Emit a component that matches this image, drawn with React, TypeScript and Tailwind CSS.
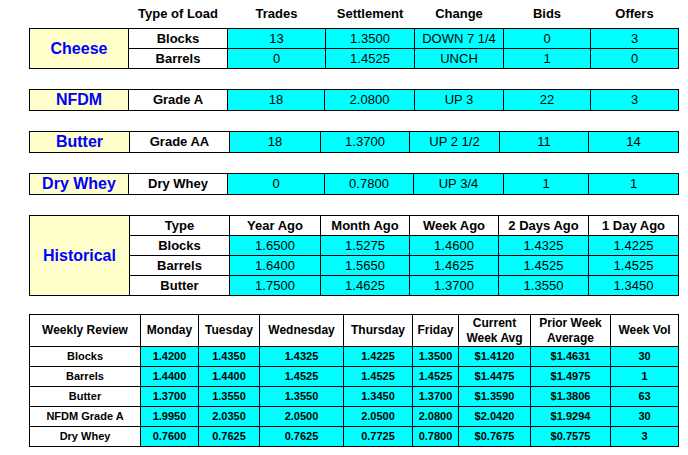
const font = { fontFamily: '"Liberation Sans", Arial, sans-serif' };

const cell = 'flex items-center justify-center';
const label = `${cell} bg-[#ffffcc] text-[16px] font-bold text-[#0000ff]`;
const kind = `${cell} bg-white text-[13px] font-bold text-black`;
const num = `${cell} bg-[#00ffff] text-[13px] text-black`;

type Row = string[];

function Values({ row }: { row: Row }) {
    return (
        <>
            <div className={kind}>{row[0]}</div>
            {row.slice(1).map((v, i) => (
                <div key={i} className={num}>{v}</div>
            ))}
        </>
    );
}

const weekly: Row[] = [
    ['Blocks', '1.4200', '1.4350', '1.4325', '1.4225', '1.3500', '$1.4120', '$1.4631', '30'],
    ['Barrels', '1.4400', '1.4400', '1.4525', '1.4525', '1.4525', '$1.4475', '$1.4975', '1'],
    ['Butter', '1.3700', '1.3550', '1.3550', '1.3450', '1.3700', '$1.3590', '$1.3806', '63'],
    ['NFDM Grade A', '1.9950', '2.0350', '2.0500', '2.0500', '2.0800', '$2.0420', '$1.9294', '30'],
    ['Dry Whey', '0.7600', '0.7625', '0.7625', '0.7725', '0.7800', '$0.7675', '$0.7575', '3'],
];

const historical: Row[] = [
    ['Blocks', '1.6500', '1.5275', '1.4600', '1.4325', '1.4225'],
    ['Barrels', '1.6400', '1.5650', '1.4625', '1.4525', '1.4525'],
    ['Butter', '1.7500', '1.4625', '1.3700', '1.3550', '1.3450'],
];

export default function App() {
    return (
        <div className="w-[688px] h-[455px] bg-white pl-[29px]" style={font}>
            {/* column headings */}
            <div className="grid grid-cols-[98px_98px_97px_88px_88px_86px_87px] gap-px px-px h-[28px] w-fit text-[13px] font-bold text-black">
                <div />
                {['Type of Load', 'Trades', 'Settlement', 'Change', 'Bids', 'Offers'].map((h) => (
                    <div key={h} className={cell}>{h}</div>
                ))}
            </div>

            {/* Cheese */}
            <div className="grid grid-cols-[98px_98px_97px_88px_88px_86px_87px] grid-rows-[19px_19px] gap-px p-px bg-black w-fit">
                <div className={`${label} row-span-2`}>Cheese</div>
                <Values row={['Blocks', '13', '1.3500', 'DOWN 7 1/4', '0', '3']} />
                <Values row={['Barrels', '0', '1.4525', 'UNCH', '1', '0']} />
            </div>

            {/* NFDM */}
            <div className="mt-[20px] grid grid-cols-[98px_98px_96px_89px_88px_86px_87px] grid-rows-[20px] gap-px p-px bg-black w-fit">
                <div className={label}>NFDM</div>
                <Values row={['Grade A', '18', '2.0800', 'UP 3', '22', '3']} />
            </div>

            {/* Butter */}
            <div className="mt-[20px] grid grid-cols-[99px_99px_90px_88px_89px_88px_89px] grid-rows-[20px] gap-px p-px bg-black w-fit">
                <div className={label}>Butter</div>
                <Values row={['Grade AA', '18', '1.3700', 'UP 2 1/2', '11', '14']} />
            </div>

            {/* Dry Whey */}
            <div className="mt-[20px] grid grid-cols-[98px_98px_96px_88px_89px_84px_89px] grid-rows-[20px] gap-px p-px bg-black w-fit">
                <div className={label}>Dry Whey</div>
                <Values row={['Dry Whey', '0', '0.7800', 'UP 3/4', '1', '1']} />
            </div>

            {/* Historical */}
            <div className="mt-[20px] grid grid-cols-[99px_99px_90px_88px_88px_89px_89px] grid-rows-[19px_19px_19px_19px] gap-px p-px bg-black w-fit">
                <div className={`${label} row-span-4`}>Historical</div>
                {['Type', 'Year Ago', 'Month Ago', 'Week Ago', '2 Days Ago', '1 Day Ago'].map((h) => (
                    <div key={h} className={kind}>{h}</div>
                ))}
                {historical.map((r) => (
                    <Values key={r[0]} row={r} />
                ))}
            </div>

            {/* Weekly review */}
            <div className="mt-[18px] grid grid-cols-[110px_57px_60px_83px_68px_45px_71px_79px_67px] grid-rows-[31px_19px_19px_19px_19px_19px] gap-px p-px bg-black w-fit text-black font-bold">
                {['Weekly Review', 'Monday', 'Tuesday', 'Wednesday', 'Thursday', 'Friday', 'Current Week Avg', 'Prior Week Average', 'Week Vol'].map((h) => (
                    <div key={h} className={`${cell} bg-white text-[12px] leading-[15px] text-center px-1`}>{h}</div>
                ))}
                {weekly.map((r) => (
                    <div key={r[0]} className="contents">
                        <div className={`${cell} bg-white text-[11px]`}>{r[0]}</div>
                        {r.slice(1).map((v, i) => (
                            <div key={i} className={`${cell} bg-[#00ffff] text-[11px]`}>{v}</div>
                        ))}
                    </div>
                ))}
            </div>
        </div>
    );
}
